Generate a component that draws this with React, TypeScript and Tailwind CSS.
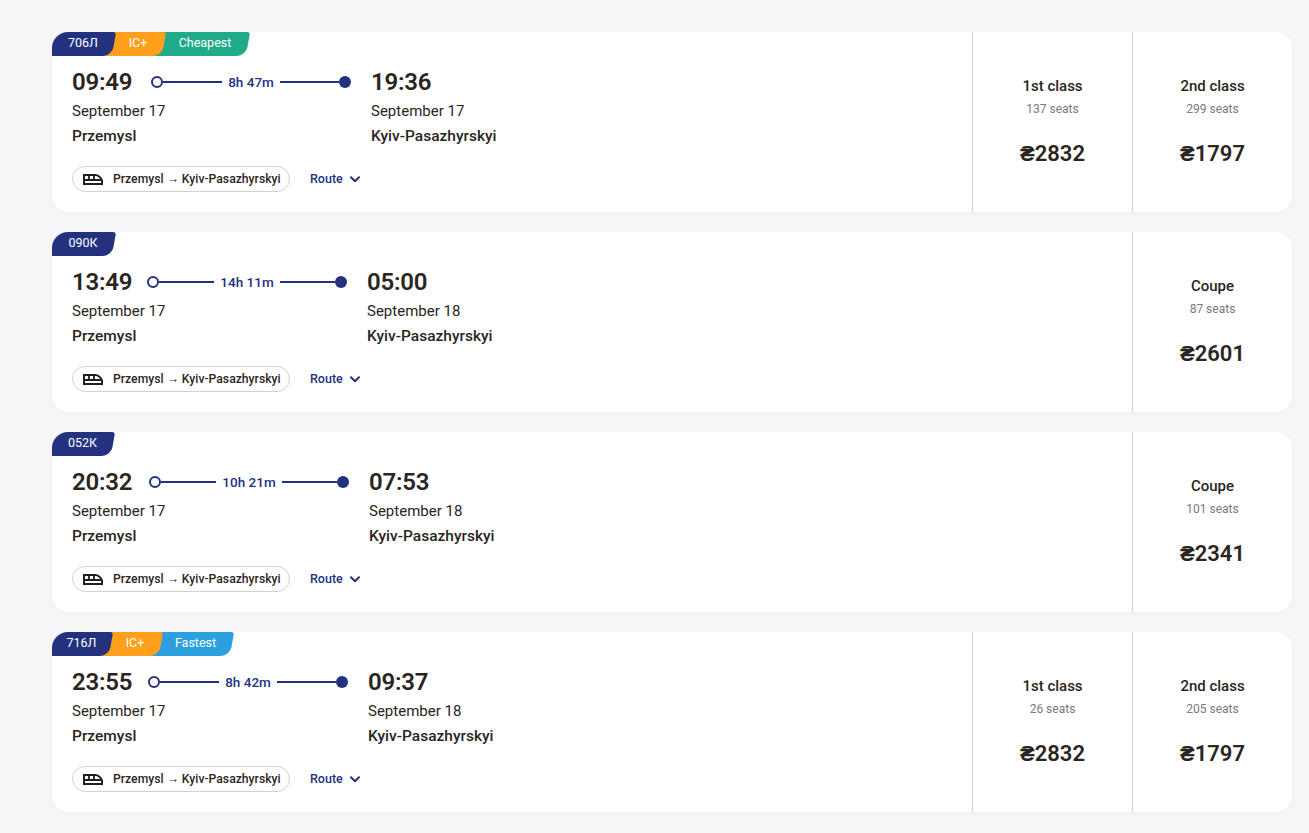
const navy = "bg-[#22327f]";
const ink = "text-[#2b2521]";

type Fare = { name: string; seats: string; price: string };
type Trip = {
  no: string;
  ic?: boolean;
  tag?: { text: string; bg: string; width: string };
  noWidth: string;
  depWidth: string;
  dep: string;
  arr: string;
  dur: string;
  arrDate: string;
  fares: Fare[];
};

const trips: Trip[] = [
  { no: "706Л", noWidth: "w-[62px]", depWidth: "w-[59px]", ic: true, tag: { text: "Cheapest", bg: "bg-[#1fab89]", width: "w-[94px]" }, dep: "09:49", arr: "19:36", dur: "8h 47m", arrDate: "September 17",
    fares: [{ name: "1st class", seats: "137 seats", price: "₴2832" }, { name: "2nd class", seats: "299 seats", price: "₴1797" }] },
  { no: "090К", noWidth: "w-[62px]", depWidth: "w-[55px]", dep: "13:49", arr: "05:00", dur: "14h 11m", arrDate: "September 18",
    fares: [{ name: "Coupe", seats: "87 seats", price: "₴2601" }] },
  { no: "052К", noWidth: "w-[61px]", depWidth: "w-[57px]", dep: "20:32", arr: "07:53", dur: "10h 21m", arrDate: "September 18",
    fares: [{ name: "Coupe", seats: "101 seats", price: "₴2341" }] },
  { no: "716Л", noWidth: "w-[59px]", depWidth: "w-[56px]", ic: true, tag: { text: "Fastest", bg: "bg-[#2ca0df]", width: "w-[81px]" }, dep: "23:55", arr: "09:37", dur: "8h 42m", arrDate: "September 18",
    fares: [{ name: "1st class", seats: "26 seats", price: "₴2832" }, { name: "2nd class", seats: "205 seats", price: "₴1797" }] },
];

function Badge({ text, bg, width, z, first }: { text: string; bg: string; width: string; z: string; first?: boolean }) {
  return (
    <div className={`relative ${z} ${width} ${first ? "" : "-ml-[10px] pl-[8px]"} h-6`}>
      <div className={`absolute inset-y-0 -left-3 right-0 -skew-x-[10deg] rounded-br-[9px] rounded-tr-[3px] ${bg}`} />
      <span className="relative flex h-full items-center justify-center pb-[1px] text-[12.5px] leading-none text-white">{text}</span>
    </div>
  );
}

function TrainIcon() {
  return (
    <svg width="20" height="11" viewBox="0 0 20 11" fill="none" className="shrink-0 -ml-[1px]">
      <path d="M1 1h11.2c3 0 6 2.6 6.8 5.6V10H1V1Z" stroke="#1f1f1f" strokeWidth="2" />
      <path d="M1 6h17.5" stroke="#1f1f1f" strokeWidth="2" />
      <path d="M6 1v5M11 1v5" stroke="#1f1f1f" strokeWidth="1.8" />
    </svg>
  );
}

function Card({ t }: { t: Trip }) {
  return (
    <div className="relative flex h-[180px] overflow-hidden rounded-[16px] bg-white shadow-[0_1px_4px_rgba(30,30,60,0.05)]">
      <div className="absolute left-0 top-0 z-10 flex">
        <Badge first text={t.no} bg={navy} width={t.noWidth} z="z-30" />
        {t.ic && <Badge text="IC+" bg="bg-[#ff9f1c]" width="w-[60px]" z="z-20" />}
        {t.tag && <Badge text={t.tag.text} bg={t.tag.bg} width={t.tag.width} z="z-10" />}
      </div>

      <div className="flex-1 pl-5 pt-[34px]">
        <div className="flex gap-5">
          <div className={t.depWidth}>
            <div className={`whitespace-nowrap text-[24px] font-semibold leading-[32px] tracking-[-0.01em] ${ink}`}>{t.dep}</div>
            <div className={`mt-[1px] whitespace-nowrap text-[15px] leading-[24px] ${ink}`}>September 17</div>
            <div className={`mt-[1px] whitespace-nowrap text-[15.5px] font-medium leading-[24px] ${ink}`}>Przemysl</div>
          </div>
          <div className="flex h-8 w-[200px] items-center">
            <span className="h-3 w-3 shrink-0 rounded-full border-2 border-[#22327f]" />
            <span className="h-[2px] flex-1 bg-[#22327f]" />
            <span className="whitespace-nowrap px-[6px] text-[13.5px] font-medium text-[#22327f]">{t.dur}</span>
            <span className="h-[2px] flex-1 bg-[#22327f]" />
            <span className="h-3 w-3 shrink-0 rounded-full bg-[#22327f]" />
          </div>
          <div className="w-0">
            <div className={`whitespace-nowrap text-[24px] font-semibold leading-[32px] tracking-[-0.01em] ${ink}`}>{t.arr}</div>
            <div className={`mt-[1px] whitespace-nowrap text-[15px] leading-[24px] ${ink}`}>{t.arrDate}</div>
            <div className={`mt-[1px] whitespace-nowrap text-[15.5px] font-medium leading-[24px] ${ink}`}>Kyiv-Pasazhyrskyi</div>
          </div>
        </div>

        <div className="mt-[18px] flex items-center">
          <div className="flex h-[26px] w-[218px] items-center gap-[10px] rounded-full border border-[#d1d1d1] pl-[11px]">
            <TrainIcon />
            <span className={`whitespace-nowrap pt-[1px] text-[12.2px] font-medium ${ink}`}>Przemysl → Kyiv-Pasazhyrskyi</span>
          </div>
          <button className="ml-5 flex items-center gap-[7px] pt-[1px] text-[12.5px] font-medium text-[#22327f]">
            Route
            <svg width="10" height="7" viewBox="0 0 10 7" fill="none">
              <path d="M1 1.2 5 5.2l4-4" stroke="#22327f" strokeWidth="2" strokeLinecap="round" strokeLinejoin="round" />
            </svg>
          </button>
        </div>
      </div>

      {t.fares.map((f) => (
        <div key={f.name} className="flex w-[160px] flex-col items-center border-l border-[#d0d0d0] pt-[42px]">
          <div className={`text-[15px] font-medium leading-6 ${ink}`}>{f.name}</div>
          <div className="mt-[1px] text-[12px] leading-[20px] text-[#787882]">{f.seats}</div>
          <div className={`mt-[19px] text-[22px] font-semibold leading-8 ${ink}`}>{f.price}</div>
        </div>
      ))}
    </div>
  );
}

export default function App() {
  return (
    <div className="min-h-[833px] bg-[#f6f6f9] pl-[52px] pr-[17px] pt-8 font-['Roboto',sans-serif]">
      <div className="flex flex-col gap-5">
        {trips.map((t) => (
          <Card key={t.no} t={t} />
        ))}
      </div>
    </div>
  );
}
